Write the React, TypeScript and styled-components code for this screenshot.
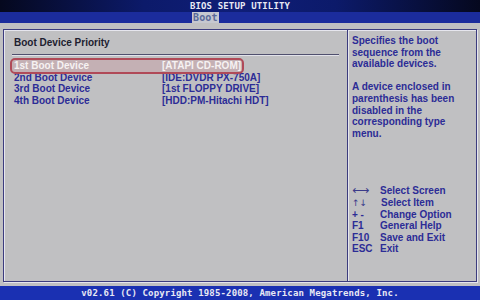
import React from 'react';
import styled, { createGlobalStyle } from 'styled-components';

const Global = createGlobalStyle`
  html, body {
    margin: 0;
    padding: 0;
    background: #c0c0c2;
  }
`;

const Screen = styled.div`
  width: 480px;
  height: 300px;
  display: flex;
  flex-direction: column;
  background: #c0c0c2;
  overflow: hidden;
`;

const TitleBar = styled.div`
  height: 12px;
  background: linear-gradient(90deg, #05081e 0%, #0c1a6a 30%, #0f1e78 50%, #0c1a6a 70%, #05081e 100%);
  display: flex;
  justify-content: center;
`;

const Mono = styled.span`
  font-family: 'DejaVu Sans Mono', 'Liberation Mono', monospace;
  font-weight: bold;
  font-size: 9px;
  color: #e8e8f4;
  letter-spacing: 0.15px;
`;

const TitleText = styled(Mono)`
  line-height: 12px;
`;

const TabBar = styled.div`
  height: 11px;
  background: #1b2c9c;
  display: flex;
  padding-left: 192px;
`;

const Tab = styled(Mono)`
  background: #c6c8d0;
  color: #5a6a9a;
  font-size: 10px;
  padding: 0 1px;
  line-height: 11px;
`;

const Body = styled.div`
  flex: 1;
  padding: 6px 3px 4px 3px;
  display: flex;
`;

const Frame = styled.div`
  flex: 1;
  display: flex;
  border: 1px solid #3c3c7e;
  box-shadow: inset 1px 1px 0 #e6e6ee, 1px 1px 0 #e6e6ee;
`;

const MainPanel = styled.div`
  width: 344px;
  border-right: 1px solid #3c3c7e;
  box-shadow: 1px 0 0 #e6e6ee;
  padding: 6px 8px 0 8px;
  box-sizing: border-box;
`;

const SideText = styled.div`
  flex: 1;
  padding: 5px 4px 0 4px;
  display: flex;
  flex-direction: column;
`;

const Sans = styled.div`
  font-family: 'Liberation Sans', Arial, sans-serif;
  font-weight: bold;
  font-size: 10px;
`;

const Heading = styled(Sans)`
  color: #202030;
  padding: 0 0 0 2px;
  line-height: 14px;
`;

const Separator = styled.div`
  height: 1px;
  background: #50506e;
  box-shadow: 0 1px 0 #e2e2ea;
  margin: 4px 0 5px 0;
`;

const Row = styled(Sans)<{ $selected?: boolean }>`
  display: grid;
  grid-template-columns: 148px auto;
  width: 228px;
  height: 11.5px;
  line-height: 11.5px;
  padding-left: 2px;
  color: ${p => (p.$selected ? '#f6f2f2' : '#2c2c96')};
  outline: 2px solid ${p => (p.$selected ? '#b04a58' : 'transparent')};
  border-radius: 3px;
  background: ${p => (p.$selected ? '#c4b0b4' : 'transparent')};
  white-space: nowrap;
`;

const Help = styled(Sans)`
  color: #2c2c96;
  line-height: 11.6px;
  white-space: pre-line;
`;

const Gap = styled.div`
  height: 11.6px;
`;

const Legend = styled.div`
  margin-top: auto;
  margin-bottom: 26px;
  display: grid;
  grid-template-columns: 28px auto;
`;

const Key = styled(Sans)<{ $indent?: boolean }>`
  color: #2c2c96;
  line-height: 11.6px;
  white-space: nowrap;
  padding-left: ${p => (p.$indent ? '1px' : '0')};
`;

const ArrowKey = styled.span<{ $size: number }>`
  font-family: 'DejaVu Sans', sans-serif;
  font-weight: normal;
  font-size: ${p => p.$size}px;
  line-height: 11px;
  color: #3a3a8a;
`;

const Footer = styled.div`
  height: 14px;
  background: #1a30b2;
  display: flex;
  justify-content: center;
  align-items: center;
`;

const rows = [
  ['1st Boot Device', '[ATAPI CD-ROM]'],
  ['2nd Boot Device', '[IDE:DVDR PX-750A]'],
  ['3rd Boot Device', '[1st FLOPPY DRIVE]'],
  ['4th Boot Device', '[HDD:PM-Hitachi HDT]'],
];

const keys: [React.ReactNode, string][] = [
  [<ArrowKey $size={12}>{'\u27F7'}</ArrowKey>, 'Select Screen'],
  [<ArrowKey $size={9}>{'\u2191\u2193'}</ArrowKey>, 'Select Item'],
  ['+ -', 'Change Option'],
  ['F1', 'General Help'],
  ['F10', 'Save and Exit'],
  ['ESC', 'Exit'],
];

export default function App() {
  return (
    <Screen>
      <Global />
      <TitleBar>
        <TitleText>BIOS SETUP UTILITY</TitleText>
      </TitleBar>
      <TabBar>
        <Tab>Boot</Tab>
      </TabBar>
      <Body>
        <Frame>
          <MainPanel>
            <Heading>Boot Device Priority</Heading>
            <Separator />
            {rows.map(([label, value], i) => (
              <Row key={label} $selected={i === 0}>
                <span>{label}</span>
                <span>{value}</span>
              </Row>
            ))}
          </MainPanel>
          <SideText>
            <Help>{'Specifies the boot\nsequence from the\navailable devices.'}</Help>
            <Gap />
            <Help>{'A device enclosed in\nparenthesis has been\ndisabled in the\ncorresponding type\nmenu.'}</Help>
            <Legend>
              {keys.map(([k, d]) => (
                <React.Fragment key={d}>
                  <Key>{k}</Key>
                  <Key $indent={d === 'Select Item'}>{d}</Key>
                </React.Fragment>
              ))}
            </Legend>
          </SideText>
        </Frame>
      </Body>
      <Footer>
        <Mono>v02.61 (C) Copyright 1985-2008, American Megatrends, Inc.</Mono>
      </Footer>
    </Screen>
  );
}
